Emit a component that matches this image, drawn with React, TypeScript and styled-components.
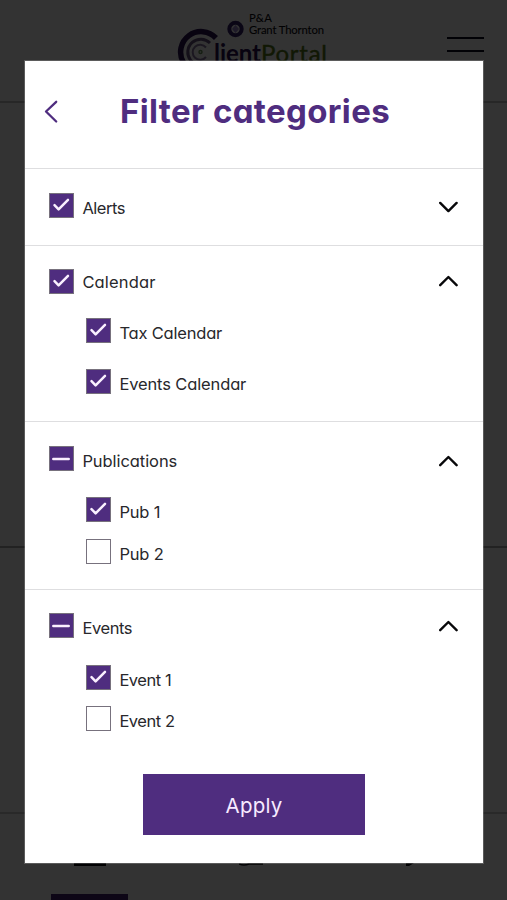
import React, { useState } from "react";
import styled, { createGlobalStyle } from "styled-components";

const purple = "#4f2d7f";

const GlobalStyle = createGlobalStyle`
  * { box-sizing: border-box; }
  body {
    margin: 0;
    background: #fff;
    color: #28282c;
    font-family: Inter, "Liberation Sans", sans-serif;
    font-feature-settings: "cv11";
    overflow: hidden;
  }
`;

const Screen = styled.div`
  position: relative;
  height: 900px;
  overflow: hidden;
  background: #fff;
`;

const Page = styled.div`
  display: flex;
  flex-direction: column;
  height: 100%;
`;

const TopBar = styled.header`
  display: flex;
  justify-content: space-between;
  height: 103px;
  padding: 10px 23px 0 176px;
  border-bottom: 2px solid #c4c4c4;
`;

const MenuIcon = styled.div`
  width: 37px;
  height: 15px;
  margin-top: 27px;
  border: solid #07071a;
  border-width: 2.5px 0;
`;

const PageSection = styled.section<{ $height: number; $line: string }>`
  height: ${(p) => p.$height}px;
  border-bottom: 2px solid ${(p) => p.$line};
`;

const TabBar = styled.nav`
  display: flex;
  flex: 1;
  flex-direction: column;
  justify-content: space-between;
  padding: 49px 92px 0 51px;
`;

const TabIcons = styled.div`
  display: flex;
  justify-content: space-between;
  padding-left: 23px;
`;

const ActiveTab = styled.div`
  width: 77px;
  height: 6px;
  background: #402070;
`;

const Backdrop = styled.div`
  position: absolute;
  inset: 0;
  padding: 61px 24px 37px 25px;
  background: rgba(0, 0, 0, 0.8);
`;

const Dialog = styled.div`
  display: flex;
  flex-direction: column;
  height: 802px;
  background: #fff;
  box-shadow: 0 0 0 1px rgba(255, 255, 255, 0.2);
`;

const DialogHeader = styled.div`
  display: flex;
  height: 108px;
  padding: 39px 0 0 19px;
  border-bottom: 1px solid #dedee0;
`;

const BackButton = styled.button`
  width: 15px;
  height: 24px;
  padding: 0;
  border: 0;
  background: none;
`;

const Title = styled.h1`
  margin: -9px 0 0 61px;
  color: ${purple};
  font-size: 33px;
  line-height: 40px;
  font-weight: 750;
  letter-spacing: 0.36px;
  white-space: nowrap;
`;

const Section = styled.section<{ $top: number; $height?: number }>`
  padding: ${(p) => p.$top}px 24px 0;
  ${(p) => p.$height && `height: ${p.$height}px; border-bottom: 1px solid #dedee0;`}
`;

const Row = styled.div<{ $child?: boolean; $gap?: number }>`
  display: flex;
  height: 25px;
  margin-top: ${(p) => p.$gap || 0}px;
  padding-left: ${(p) => (p.$child ? 37 : 0)}px;
`;

const Box = styled.button<{ $filled: boolean }>`
  display: flex;
  width: 25px;
  height: 25px;
  padding: 0;
  border: 1px solid #77717d;
  background: ${(p) => (p.$filled ? purple : "#fff")};
`;

const Label = styled.span<{ $top: number; $spacing?: number }>`
  flex: 1;
  margin: ${(p) => p.$top}px 0 0 8.4px;
  font-size: 16.5px;
  line-height: 20px;
  letter-spacing: ${(p) => p.$spacing ?? 0}px;
  white-space: nowrap;
`;

const Toggle = styled.button<{ $top: number }>`
  width: 20px;
  height: 12px;
  margin: ${(p) => p.$top}px 0 0;
  padding: 0;
  border: 0;
  background: none;
  svg { display: block; }
`;

const ApplyButton = styled.button`
  align-self: flex-start;
  width: 222px;
  height: 61px;
  margin: auto 0 28px 118px;
  padding: 1px 0 0;
  border: 0;
  background: ${purple};
  color: #f7eaff;
  font: 400 20.5px Inter, sans-serif;
  letter-spacing: 0.2px;
`;

type Mark = "checked" | "mixed" | "empty";

function Checkbox({ mark, label }: { mark: Mark; label: string }) {
  const [value, setValue] = useState<Mark>(mark);
  return (
    <Box
      type="button"
      role="checkbox"
      aria-label={label}
      aria-checked={value === "mixed" ? "mixed" : value === "checked"}
      $filled={value !== "empty"}
      onClick={() => setValue(value === "checked" ? "empty" : "checked")}
    >
      <svg width="23" height="23" viewBox="0 0 23 23" fill="none" stroke="#faf0ff" strokeWidth="2.5" strokeLinecap="round" strokeLinejoin="round">
        {value === "checked" && <path d="M4.5 11.2l4.1 4.2L18 5.8" />}
        {value === "mixed" && <path d="M3.3 12h15.4" />}
      </svg>
    </Box>
  );
}

interface Item { label: string; mark: Mark; gap: number; spacing: number }
interface Group {
  label: string; mark: Mark; top: number; height?: number; spacing: number;
  labelTop: number; arrowTop: number; open: boolean; items: Item[];
}

const groups: Group[] = [
  { label: "Alerts", mark: "checked", top: 24, height: 77, spacing: -0.45, labelTop: 5, arrowTop: 8, open: false, items: [] },
  {
    label: "Calendar", mark: "checked", top: 23, height: 176, spacing: 0.15, labelTop: 3, arrowTop: 6, open: true,
    items: [
      { label: "Tax Calendar", mark: "checked", gap: 24, spacing: -0.2 },
      { label: "Events Calendar", mark: "checked", gap: 26, spacing: -0.13 },
    ],
  },
  {
    label: "Publications", mark: "mixed", top: 24, height: 168, spacing: -0.07, labelTop: 5, arrowTop: 9, open: true,
    items: [
      { label: "Pub 1", mark: "checked", gap: 26, spacing: -0.2 },
      { label: "Pub 2", mark: "empty", gap: 17, spacing: -0.2 },
    ],
  },
  {
    label: "Events", mark: "mixed", top: 23, spacing: -0.4, labelTop: 5, arrowTop: 7, open: true,
    items: [
      { label: "Event 1", mark: "checked", gap: 27, spacing: -0.45 },
      { label: "Event 2", mark: "empty", gap: 16, spacing: -0.45 },
    ],
  },
];

function Logo() {
  return (
    <svg width="154" height="66" viewBox="176 10 154 66" aria-label="P&A Grant Thornton Client Portal">
      <g fill="none">
        <path d="M216 38A20.5 20.5 0 1 0 209 71" stroke="#291052" strokeWidth="5.5" />
        <path d="M210 43A13 13 0 1 0 208 63" stroke="#65507e" strokeWidth="3" />
        <path d="M206 47.5A7.5 7.5 0 1 0 206 57" stroke="#8875a0" strokeWidth="2" />
        <circle cx="200.5" cy="52" r="1.5" stroke="#6f985e" strokeWidth="1.5" />
        <circle cx="235.5" cy="29" r="6.2" stroke="#35206a" strokeWidth="4" />
        <path d="M235.5 26l2.6 3-2.6 3-2.6-3z" fill="#9c87cb" stroke="#9c87cb" strokeWidth="1.3" />
      </g>
      <g fontFamily="Lato, sans-serif" fill="#08080e" stroke="#08080e" strokeWidth="0.1">
        <text x="249" y="22" fontSize="11.3" textLength="23">P&amp;A</text>
        <text x="249" y="34" fontSize="11.3" textLength="75">Grant Thornton</text>
      </g>
      <g fontFamily="Lato, sans-serif" fontSize="24">
        <text x="214" y="61.5" fontWeight="700" fill="#291052" textLength="47">lient</text>
        <text x="261" y="61.5" fill="#567818" stroke="#567818" strokeWidth="0.4" textLength="66">Portal</text>
      </g>
    </svg>
  );
}

export default function App() {
  return (
    <>
      <GlobalStyle />
      <Screen>
        <Page>
          <TopBar>
            <Logo />
            <MenuIcon />
          </TopBar>
          <PageSection $height={445} $line="#aaa" />
          <PageSection $height={266} $line="#ccc" />
          <TabBar>
            <TabIcons>
              <svg width="32" height="4"><path d="M0 0h32v3H0z" fill="#08080e" /></svg>
              <svg width="34" height="4"><path d="M0 1q5 2 10 0h14" fill="none" stroke="#08080e" strokeWidth="1.6" /></svg>
              <svg width="10" height="4"><path d="M1 0h8L4 3H1z" fill="#08080e" /></svg>
            </TabIcons>
            <ActiveTab />
          </TabBar>
        </Page>
        <Backdrop>
          <Dialog role="dialog" aria-label="Filter categories">
            <DialogHeader>
              <BackButton type="button" aria-label="Back">
                <svg width="15" height="24" fill="none" stroke={purple} strokeWidth="2.3" strokeLinecap="round" strokeLinejoin="round">
                  <path d="M12.2 1.8L2 11.5l10.2 10" />
                </svg>
              </BackButton>
              <Title>Filter categories</Title>
            </DialogHeader>
            {groups.map((g) => (
              <Section key={g.label} $top={g.top} $height={g.height}>
                <Row>
                  <Checkbox mark={g.mark} label={g.label} />
                  <Label $top={g.labelTop} $spacing={g.spacing}>{g.label}</Label>
                  <Toggle type="button" aria-label={g.label} aria-expanded={g.open} $top={g.arrowTop}>
                    <svg width="20" height="12" fill="none" stroke="#08080a" strokeWidth="2.4" strokeLinecap="round" strokeLinejoin="round">
                      <path d={g.open ? "M1.2 10.2L9.4 2l8.2 8.2" : "M1.2 1.9L9.4 10.1l8.2-8.2"} />
                    </svg>
                  </Toggle>
                </Row>
                {g.items.map((item) => (
                  <Row key={item.label} $child $gap={item.gap}>
                    <Checkbox mark={item.mark} label={item.label} />
                    <Label $top={5} $spacing={item.spacing}>{item.label}</Label>
                  </Row>
                ))}
              </Section>
            ))}
            <ApplyButton type="button">Apply</ApplyButton>
          </Dialog>
        </Backdrop>
      </Screen>
    </>
  );
}
